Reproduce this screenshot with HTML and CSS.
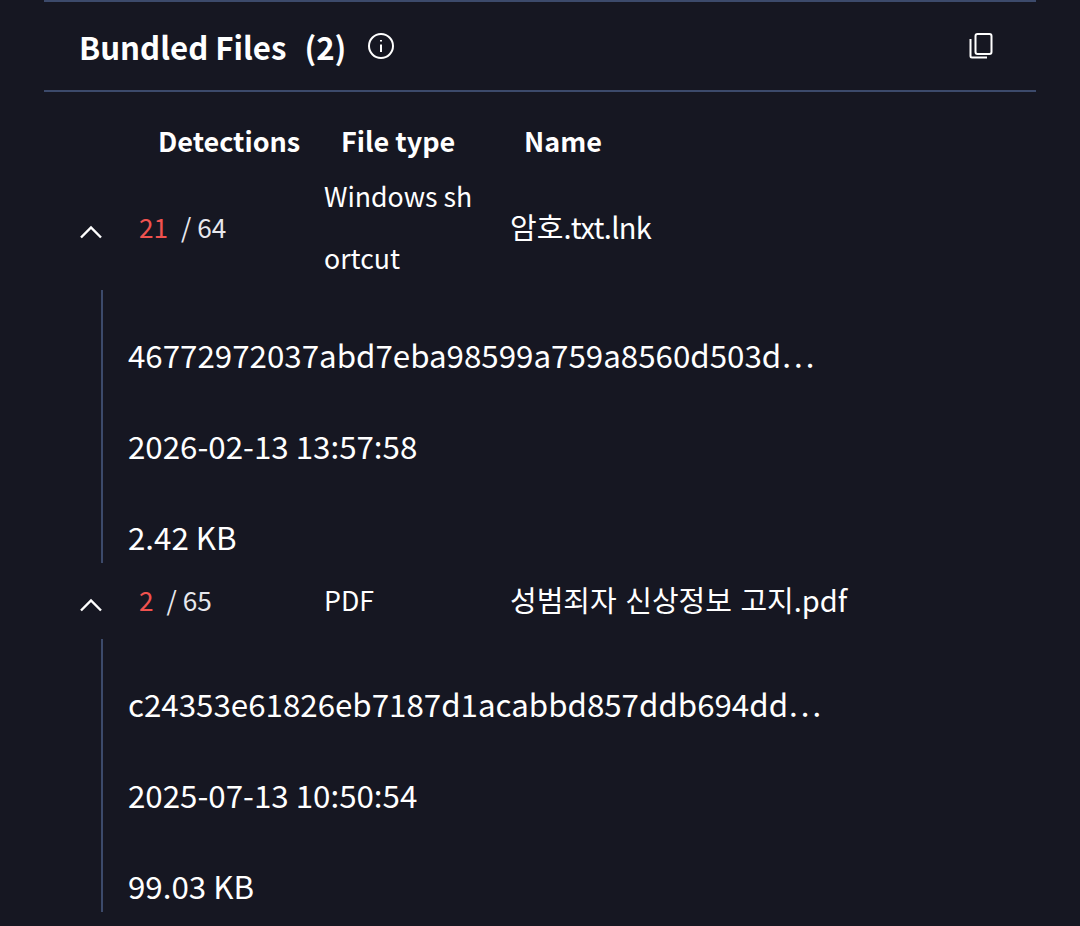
FILE: index.html
```html
<!DOCTYPE html>
<html lang="en">
<head>
<meta charset="utf-8">
<title>Bundled Files</title>
<link rel="stylesheet" href="styles.css">
</head>
<body>
<section class="panel">
  <header class="panel-head">
    <h2 class="title"><span>Bundled Files</span><span>(2)</span></h2>
    <svg class="info" viewBox="0 0 26 26" aria-hidden="true"><circle cx="13" cy="13" r="12" /><path d="M13 11.500v7.500" /><path d="M13 7v1.600" /></svg>
    <svg class="copy" viewBox="0 0 24 26" aria-hidden="true"><rect x="6.500" y="1" width="16" height="20" rx="2" /><path d="M1.500 6v17a1.500 1.500 0 0 0 1.500 1.500h15" /></svg>
  </header>
  <div class="cols cols-head">
    <span></span>
    <span class="th">Detections</span>
    <span class="th">File type</span>
    <span class="th">Name</span>
  </div>
  <article class="file">
    <div class="cols row">
      <svg class="chev" viewBox="0 0 24 14" aria-hidden="true"><path d="M2 12.500 12 2.500l10 10" /></svg>
      <span class="det"><b>21</b><i>/ 64</i></span>
      <span class="type">Windows shortcut</span>
      <span class="name">암호<span class="ext">.txt.lnk</span></span>
    </div>
    <ul class="details first">
      <li>46772972037abd7eba98599a759a8560d503d…</li>
      <li>2026-02-13 13:57:58</li>
      <li>2.42 KB</li>
    </ul>
  </article>
  <article class="file">
    <div class="cols row">
      <svg class="chev" viewBox="0 0 24 14" aria-hidden="true"><path d="M2 12.500 12 2.500l10 10" /></svg>
      <span class="det"><b>2</b><i>/ 65</i></span>
      <span class="type">PDF</span>
      <span class="name spaced">성범죄자 신상정보 고지.pdf</span>
    </div>
    <ul class="details">
      <li>c24353e61826eb7187d1acabbd857ddb694dd…</li>
      <li>2025-07-13 10:50:54</li>
      <li>99.03 KB</li>
    </ul>
  </article>
</section>
</body>
</html>
```
FILE: styles.css
```css
* { box-sizing: border-box; }
html, body { margin: 0; height: 100%; }
body {
  background: #161722;
  color: #fff;
  font-family: "Noto Sans CJK KR", "Noto Sans", sans-serif;
  overflow: hidden;
}
.panel { margin: 0 44px; }
.panel-head {
  height: 92px;
  border-top: 2px solid #3c4a6b;
  border-bottom: 2px solid #3c4a6b;
  padding: 0 43px 0 35px;
  display: flex;
  align-items: center;
}
.title {
  margin: 0;
  font-size: 31.200px;
  font-weight: 700;
  display: flex;
  gap: 18px;
}
.info { width: 26px; height: 26px; margin-left: 22px; fill: none; stroke: #fff; stroke-width: 2; }
.copy { width: 24px; height: 26px; margin-left: auto; fill: none; stroke: #fff; stroke-width: 2; }
.cols {
  display: grid;
  grid-template-columns: 95px 186px 185px 1fr;
  align-items: center;
}
.cols-head { height: 74px; padding-top: 23px; }
.th { font-size: 27px; font-weight: 700; }
.th:nth-child(2) { padding-left: 19px; }
.th:nth-child(3) { padding-left: 16px; }
.th:nth-child(4) { padding-left: 14px; }
.row { font-size: 26.700px; min-height: 76px; margin-top: -1px; }
.chev { width: 24px; height: 14px; margin: 10px 0 0 35px; fill: none; stroke: #fff; stroke-width: 2.400; }
.det { font-size: 26.200px; display: flex; gap: 13px; }
.det b { font-weight: 400; color: #f0524f; }
.det i { font-style: normal; color: #e8e8ee; }
.type { line-height: 62px; width: 150px; word-break: break-all; margin-left: -1px; }
.name { font-size: 29px; padding-bottom: 2px; }
.name .ext { letter-spacing: -0.700px; }
.name.spaced { word-spacing: 2px; }
.details {
  list-style: none;
  margin: 1px 0 0 57px;
  padding: 0 0 0 25px;
  border-left: 2px solid #3c4a6b;
  font-size: 31.300px;
}
.details li { height: 91px; padding-top: 38px; display: flex; align-items: center; }
```
